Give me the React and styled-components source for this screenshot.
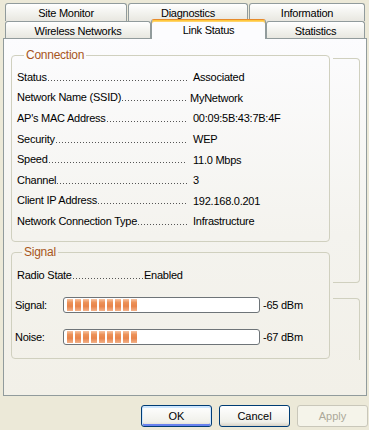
import React from 'react'
import styled, { createGlobalStyle } from 'styled-components'

const GlobalStyle = createGlobalStyle`
  body {
    margin: 0;
    background: #ece9d8;
    font-family: "Liberation Sans", Arial, sans-serif;
    font-size: 11px;
    letter-spacing: -0.25px;
    color: #000;
  }
`

const Window = styled.div`
  width: 369px;
  height: 430px;
  box-sizing: border-box;
  padding: 3px 0 0 3px;
  display: flex;
  flex-direction: column;
  overflow: hidden;
`

const TabStrip = styled.div`
  display: flex;
  flex-direction: column;
  padding-left: 2px;
`

const TabRow = styled.div`
  display: flex;
  gap: ${props => props.gap}px;
  height: ${props => props.h}px;
`

const Tab = styled.div`
  box-sizing: border-box;
  width: ${props => props.w}px;
  height: 100%;
  border: 1px solid #919b9c;
  border-bottom: none;
  border-radius: 3px 3px 0 0;
  background: linear-gradient(to bottom, #ffffff, #f3f3ef 50%, #e8e7e0);
  display: flex;
  align-items: center;
  justify-content: center;
  padding-top: 1px;
`

const ActiveTab = styled(Tab)`
  position: relative;
  z-index: 1;
  height: 20px;
  margin-top: -2px;
  border-top: 1px solid #e68b2c;
  box-shadow: inset 0 1px 0 #ffc83c, inset 0 2px 0 #ffd36b;
  background: #fcfcfe;
  padding-top: 0;
`

const Panel = styled.div`
  box-sizing: border-box;
  width: 364px;
  height: 358px;
  border: 1px solid #919b9c;
  background: linear-gradient(to bottom, #fcfcfe, #f4f3ee 55%, #f2f0e8);
  display: flex;
  gap: 3px;
  padding: 10px 0 0 7px;
`

const MainColumn = styled.div`
  width: 319px;
  display: flex;
  flex-direction: column;
`

const SideColumn = styled.div`
  width: 27px;
  display: flex;
  flex-direction: column;
`

const SideBox = styled.div`
  box-sizing: border-box;
  height: ${props => props.h}px;
  margin-top: ${props => props.top}px;
  border: 1px solid #d0d0bf;
  border-left: none;
  border-bottom: ${props => (props.open ? 'none' : '1px solid #d0d0bf')};
  border-radius: ${props => (props.open ? '0 4px 0 0' : '0 4px 4px 0')};
`

const GroupBox = styled.fieldset`
  margin: ${props => props.top || 0}px 0 0 0;
  padding: ${props => props.pad};
  border: 1px solid #d0d0bf;
  border-radius: 4px;
  min-width: 0;
`

const Legend = styled.legend`
  color: #a8561c;
  padding: 0 2px;
  margin-left: 7px;
  font-size: 12px;
  line-height: 13px;
`

const InfoRow = styled.div`
  display: flex;
  align-items: center;
  height: 20.6px;
  white-space: nowrap;
  padding-left: ${props => props.indent || 0}px;
`

const LabelCell = styled.div`
  width: ${props => props.w}px;
  flex-shrink: 0;
  display: flex;
  align-items: flex-end;
  line-height: 13px;
`

const Dots = styled.span`
  flex: 1;
  height: 1px;
  margin: 0 0 3px 1px;
  background: linear-gradient(to right, #555 1px, transparent 1px) 0 0 / 3px 1px repeat-x;
`

const Value = styled.span`
  white-space: nowrap;
  margin-left: ${props => props.gap || 0}px;
`

const MeterRow = styled.div`
  display: flex;
  align-items: center;
  height: 16px;
  margin-top: ${props => props.top}px;
`

const MeterLabel = styled.span`
  width: 48px;
  flex-shrink: 0;
`

const Meter = styled.div`
  box-sizing: border-box;
  width: 197px;
  height: 16px;
  border: 1px solid #6e7478;
  border-radius: 3px;
  background: #fff;
  padding: 1px 2px 1px 3px;
  display: flex;
  gap: 2px;
  margin-right: 3px;
`

const Segment = styled.div`
  width: 6px;
  height: 12px;
  background: linear-gradient(to bottom, #f7c4a2 0%, #ec9158 30%, #e8844a 60%, #f2b189 100%);
`

const ButtonBar = styled.div`
  display: flex;
  justify-content: flex-end;
  gap: 7px;
  margin-top: 9px;
  padding-right: 1px;
`

const Button = styled.button`
  box-sizing: border-box;
  width: 71px;
  height: 22px;
  border: 1px solid ${props => (props.disabled ? '#c9c7ba' : '#003c74')};
  border-radius: 3px;
  background: ${props =>
    props.disabled ? '#f5f4ea' : 'linear-gradient(to bottom, #ffffff, #f0f0ea 80%, #d8d2c6)'};
  color: ${props => (props.disabled ? '#aca899' : '#000')};
  font-family: "Liberation Sans", Arial, sans-serif;
  font-size: 11px;
  padding: 0;
  box-shadow: ${props =>
    props.primary ? 'inset 0 1px 0 1px #cee7ff, inset 0 -1px 0 1px #6982ee' : 'none'};
`

// [label, value, gap between the dot leader and the value]
const connection = [
  ['Status', 'Associated', 6],
  ['Network Name (SSID)', 'MyNetwork', 3],
  ["AP's MAC Address", '00:09:5B:43:7B:4F', 6],
  ['Security', 'WEP', 6],
  ['Speed', '11.0 Mbps', 6],
  ['Channel', '3', 6],
  ['Client IP Address', '192.168.0.201', 6],
  ['Network Connection Type', 'Infrastructure', 6],
]

const meters = [
  { label: 'Signal:', bars: 9, value: '-65 dBm', top: 12 },
  { label: 'Noise:', bars: 9, value: '-67 dBm', top: 16 },
]

export default function App() {
  return (
    <Window>
      <GlobalStyle />
      <TabStrip>
        <TabRow h={18} gap={1}>
          <Tab w={122}>Site Monitor</Tab>
          <Tab w={120}>Diagnostics</Tab>
          <Tab w={116}>Information</Tab>
        </TabRow>
        <TabRow h={17} gap={0}>
          <Tab w={146}>Wireless Networks</Tab>
          <ActiveTab w={115}>Link Status</ActiveTab>
          <Tab w={99}>Statistics</Tab>
        </TabRow>
      </TabStrip>
      <Panel>
        <MainColumn>
          <GroupBox pad="5px 0 9px 5px">
            <Legend>Connection</Legend>
            {connection.map(([label, value, gap]) => (
              <InfoRow key={label}>
                <LabelCell w={170}>
                  {label}
                  <Dots />
                </LabelCell>
                <Value gap={gap}>{value}</Value>
              </InfoRow>
            ))}
          </GroupBox>
          <GroupBox top={4} pad="6px 0 13px 3px">
            <Legend>Signal</Legend>
            <InfoRow indent={2}>
              <LabelCell w={127}>
                Radio State
                <Dots />
              </LabelCell>
              <Value>Enabled</Value>
            </InfoRow>
            {meters.map(m => (
              <MeterRow key={m.label} top={m.top}>
                <MeterLabel>{m.label}</MeterLabel>
                <Meter>
                  {Array.from({ length: m.bars }, (_, i) => (
                    <Segment key={i} />
                  ))}
                </Meter>
                <Value>{m.value}</Value>
              </MeterRow>
            ))}
          </GroupBox>
        </MainColumn>
        <SideColumn>
          <SideBox top={9} h={225} />
          <SideBox top={15} h={62} open />
        </SideColumn>
      </Panel>
      <ButtonBar>
        <Button primary>OK</Button>
        <Button>Cancel</Button>
        <Button disabled>Apply</Button>
      </ButtonBar>
    </Window>
  )
}
